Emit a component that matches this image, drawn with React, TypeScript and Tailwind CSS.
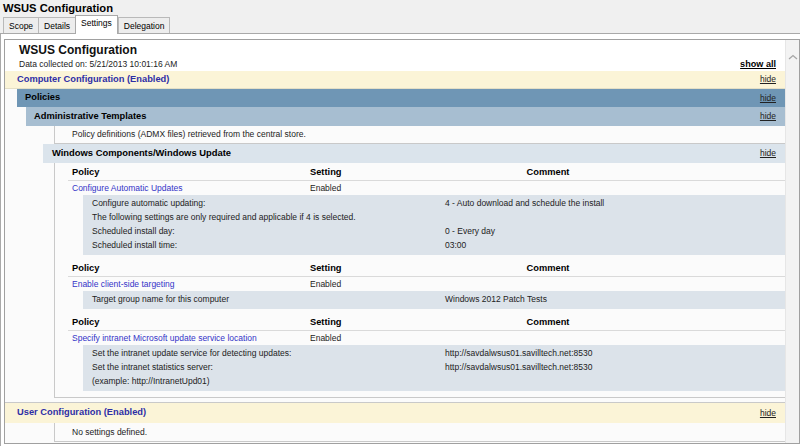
const policies = [
  {
    name: "Configure Automatic Updates",
    setting: "Enabled",
    rows: [
      ["Configure automatic updating:", "4 - Auto download and schedule the install"],
      ["The following settings are only required and applicable if 4 is selected.", ""],
      ["Scheduled install day:", "0 - Every day"],
      ["Scheduled install time:", "03:00"],
    ],
  },
  {
    name: "Enable client-side targeting",
    setting: "Enabled",
    rows: [["Target group name for this computer", "Windows 2012 Patch Tests"]],
  },
  {
    name: "Specify intranet Microsoft update service location",
    setting: "Enabled",
    rows: [
      ["Set the intranet update service for detecting updates:", "http://savdalwsus01.savilltech.net:8530"],
      ["Set the intranet statistics server:", "http://savdalwsus01.savilltech.net:8530"],
      ["(example: http://IntranetUpd01)", ""],
    ],
  },
]

const tabs = ["Scope", "Details", "Settings", "Delegation"]

function Hide() {
  return <span className="text-[8.5px] text-[#222] underline">hide</span>
}

export default function App() {
  return (
    <div className="flex h-[446px] w-[800px] flex-col overflow-hidden bg-[#f0f0f0] font-['Liberation_Sans',Arial,sans-serif] text-black">
      <div className="h-[16px] pl-[3px] text-[11.2px] font-bold leading-[16px]">WSUS Configuration</div>

      {/* tabs */}
      <div className="flex h-[18px] items-end border-b border-[#a9a9a9] pl-[3px]">
        {tabs.map((tab) =>
          tab === "Settings" ? (
            <div
              key={tab}
              className="relative z-10 -mb-px h-[19px] border border-b-0 border-[#a9a9a9] bg-white px-[5px] text-[8.5px] leading-[15px]"
            >
              {tab}
            </div>
          ) : (
            <div
              key={tab}
              className="-mr-px h-[16px] border border-b-0 border-[#b9b9b9] bg-[#ededed] px-[5px] text-[8.5px] leading-[16px]"
            >
              {tab}
            </div>
          )
        )}
      </div>

      {/* tab page */}
      <div className="flex-1 border-l border-[#a9a9a9] bg-white pl-[3px] pt-[5px]">
        <div className="flex h-[405px] border border-[#a0a0a0]">
          <div className="flex w-[780px] flex-col bg-[#fbfbfb]">
            {/* header */}
            <div className="bg-white pl-[14px] pt-[2px]">
              <div className="h-[16px] text-[12px] font-bold leading-[16px] text-[#111]">WSUS Configuration</div>
              <div className="flex h-[13px] items-center justify-between pr-[9px] text-[8.5px]">
                <span className="text-[#222]">Data collected on: 5/21/2013 10:01:16 AM</span>
                <span className="text-[9.1px] font-bold underline">show all</span>
              </div>
            </div>

            {/* computer configuration */}
            <div className="flex h-[18px] items-center justify-between border-b border-[#e4dfc6] bg-[#fbf4d7] pl-[12px] pr-[9px]">
              <span className="text-[9.3px] font-bold text-[#2e2ea6]">Computer Configuration (Enabled)</span>
              <Hide />
            </div>
            <div className="ml-[12px] flex h-[18px] items-center justify-between bg-[#6f96b5] pl-[8px] pr-[9px]">
              <span className="text-[9.3px] font-bold">Policies</span>
              <Hide />
            </div>
            <div className="ml-[21px] flex h-[19px] items-center justify-between bg-[#a7bed1] pl-[8px] pr-[9px]">
              <span className="text-[9.3px] font-bold">Administrative Templates</span>
              <Hide />
            </div>
            <div className="ml-[49px] flex h-[18px] items-center border-b border-l border-[#c9c9c9] pl-[17px] text-[8.5px] text-[#222]">
              Policy definitions (ADMX files) retrieved from the central store.
            </div>
            <div className="ml-[38px] flex h-[19px] items-center justify-between bg-[#dbe4ec] pl-[9px] pr-[9px]">
              <span className="text-[9.4px] font-bold">Windows Components/Windows Update</span>
              <Hide />
            </div>

            {/* policy tables */}
            <div className="ml-[49px] border-b border-l border-[#c9c9c9] pb-[6px] pt-[2px]">
              {policies.map((p, i) => (
                <div key={p.name} className={i > 0 ? "mt-[6px]" : ""}>
                  <div className="ml-[13px] grid h-[16px] grid-cols-[238px_134px_216px] items-center border-b border-[#dadada] text-[9.3px] font-bold">
                    <span className="pl-[4px]">Policy</span>
                    <span className="pl-[4px]">Setting</span>
                    <span className="text-center">Comment</span>
                  </div>
                  <div className="ml-[13px] grid h-[14px] grid-cols-[238px_134px_216px] items-center text-[8.5px]">
                    <span className="pl-[4px] text-[#3434c8]">{p.name}</span>
                    <span className="pl-[4px] text-[#222]">{p.setting}</span>
                    <span />
                  </div>
                  <div className="ml-[28px] bg-[#dce3ea] pb-[3px] pt-[1px] text-[8.5px] text-[#222]">
                    {p.rows.map(([label, value]) => (
                      <div key={label} className="flex h-[14px] items-center whitespace-nowrap">
                        <span className="w-[362px] pl-[9px]">{label}</span>
                        <span>{value}</span>
                      </div>
                    ))}
                  </div>
                </div>
              ))}
            </div>

            {/* user configuration */}
            <div className="mt-[4px] flex h-[21px] items-center justify-between border-t border-[#c9c9c9] bg-[#fbf4d7] pl-[12px] pr-[9px]">
              <span className="text-[9.3px] font-bold text-[#2e2ea6]">User Configuration (Enabled)</span>
              <Hide />
            </div>
            <div className="ml-[49px] flex h-[19px] items-center border-b border-l border-[#c9c9c9] pl-[17px] text-[8.5px] text-[#222]">
              No settings defined.
            </div>
          </div>

          {/* scrollbar */}
          <div className="flex flex-1 justify-center border-l border-[#e6e6e6] bg-[#f3f3f3] pt-[14px]">
            <svg width="10" height="6" viewBox="0 0 10 6">
              <path d="M1 5 L5 1.5 L9 5" fill="none" stroke="#a6a6a6" strokeWidth="1.3" />
            </svg>
          </div>
        </div>
      </div>
    </div>
  )
}
